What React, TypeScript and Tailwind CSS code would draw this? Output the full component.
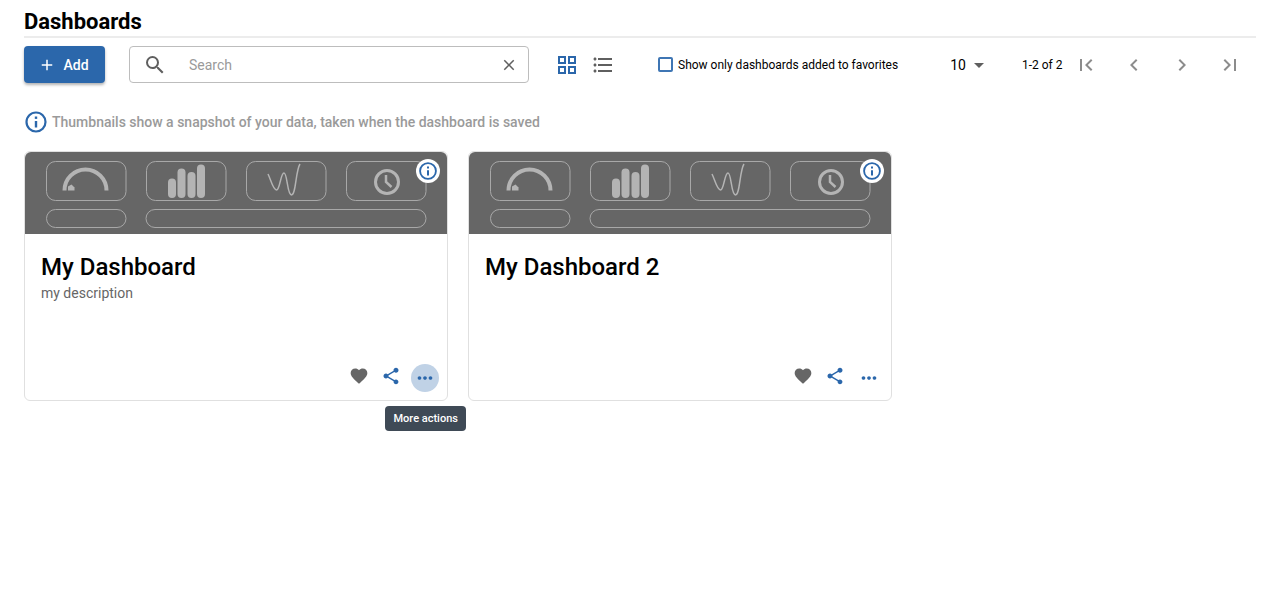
import React from 'react';
import {
  MdAdd,
  MdArrowDropDown,
  MdChevronLeft,
  MdChevronRight,
  MdClose,
  MdFavorite,
  MdFirstPage,
  MdFormatListBulleted,
  MdLastPage,
  MdMoreHoriz,
  MdSearch,
  MdShare,
} from 'react-icons/md';

const InfoIcon: React.FC<{ size: number }> = ({ size }) => (
  <svg viewBox="0 0 24 24" width={size} height={size} fill="none" stroke="currentColor">
    <circle cx="12" cy="12" r="9.500" strokeWidth="2.200" />
    <path d="M12 11v6.500" strokeWidth="2.400" />
    <path d="M12 6.500v2.400" strokeWidth="2.400" />
  </svg>
);

const Thumbnail: React.FC = () => (
  <svg viewBox="25 152 422 82" className="block h-[82px] w-[422px] bg-[#666666]" fill="none">
    <g stroke="#a8a8a8" strokeWidth="1">
      <rect x="46.5" y="161.5" width="79.500" height="39" rx="9" />
      <rect x="146.5" y="161.5" width="79.500" height="39" rx="9" />
      <rect x="246.5" y="161.5" width="79.500" height="39" rx="9" />
      <rect x="346.5" y="161.5" width="79.500" height="39" rx="9" />
      <rect x="46.5" y="209.5" width="79.500" height="18" rx="9" />
      <rect x="146" y="209.5" width="280" height="18" rx="9" />
    </g>
    <path d="M64.500 190.500a21 21 0 0 1 42 0" stroke="#b4b4b4" strokeWidth="4" />
    <path d="M68 190.500v-4l3.500-2 3 3v3z" fill="#b4b4b4" />
    <g stroke="#b4b4b4" strokeWidth="8" strokeLinecap="round">
      <path d="M172 182.500v11.500" />
      <path d="M181.500 172.500v21.500" />
      <path d="M191.500 176v18" />
      <path d="M201 168.500v25.500" />
    </g>
    <path
      d="M268 174c3 6 5 16 8.500 16s4-17 7.500-17 3 22 7.500 22 4-24 8.500-31"
      stroke="#b4b4b4"
      strokeWidth="1.500"
    />
    <circle cx="387" cy="182" r="11.500" stroke="#b4b4b4" strokeWidth="3" />
    <path d="M386 175v7l5.500 5" stroke="#b4b4b4" strokeWidth="2.500" />
  </svg>
);

interface CardProps {
  title: string;
  description?: string;
  hovered?: boolean;
}

const DashboardCard: React.FC<CardProps> = ({ title, description, hovered }) => (
  <div className="relative flex h-[250px] w-[424px] flex-col rounded-md border border-[#e0e0e0] bg-white">
    <div className="overflow-hidden rounded-t-md">
      <Thumbnail />
    </div>
    <div className="absolute top-[7px] right-[7px] flex h-6 w-6 items-center justify-center rounded-full bg-white text-[#2b67ab]">
      <InfoIcon size={20} />
    </div>
    <div className="flex-1 px-4 pt-[17px]">
      <h2 className="text-2xl leading-8 font-medium text-black">{title}</h2>
      {description && <p className="mt-[1px] text-sm leading-[18px] text-[#666666]">{description}</p>}
    </div>
    <div className="flex items-center justify-end gap-1 pr-2 pb-[6px]">
      <span className="mb-[4px] flex h-7 w-7 items-center justify-center text-[#666666]">
        <MdFavorite size={20} />
      </span>
      <span className="mb-[4px] flex h-7 w-7 items-center justify-center text-[#2b67ab]">
        <MdShare size={20} />
      </span>
      <span
        className={`ml-[2px] flex h-7 w-7 items-center justify-center rounded-full text-[#2b67ab] ${hovered ? 'bg-[#c0d2e6]' : ''}`}
      >
        <MdMoreHoriz size={22} />
      </span>
    </div>
    {hovered && (
      <div className="absolute top-[254px] left-[360px] rounded bg-[#3f4a56] px-[8.5px] py-[6px] text-[11px] leading-[13px] font-medium whitespace-nowrap text-white">
        More actions
      </div>
    )}
  </div>
);

export default function App() {
  return (
    <div className="min-h-[590px] bg-white px-6 font-['Roboto',sans-serif] text-black">
      <h1 className="h-[38px] border-b-2 border-[#ececec] pt-[8px] text-[22px] leading-[27px] font-bold">
        Dashboards
      </h1>

      <div className="mt-2 flex h-[37px] items-center">
        <button className="flex h-[37px] w-[81px] items-center justify-center gap-[7px] rounded bg-[#2b67ab] pr-[2px] text-sm font-medium text-white shadow-[0_2px_3px_rgba(0,0,0,0.3)]">
          <MdAdd size={18} />
          Add
        </button>

        <div className="ml-6 flex h-[37px] w-[400px] items-center rounded border border-[#bdbdbd] pr-[10px] pl-[13px]">
          <MdSearch size={24} className="text-[#5f5f5f]" />
          <span className="ml-[22px] flex-1 text-sm text-[#9a9a9a]">Search</span>
          <MdClose size={18} className="text-[#5f5f5f]" />
        </div>

        <svg viewBox="0 0 18 18" className="ml-[29px] h-[18px] w-[18px]" fill="none" stroke="#2b67ab" strokeWidth="2">
          <rect x="1" y="1" width="6" height="6" />
          <rect x="11" y="1" width="6" height="6" />
          <rect x="1" y="11" width="6" height="6" />
          <rect x="11" y="11" width="6" height="6" />
        </svg>
        <MdFormatListBulleted size={24} className="ml-[15px] text-[#5f5f5f]" />

        <span className="ml-[43px] h-[15px] w-[15px] rounded-[2px] border-2 border-[#3f76b4] bg-white" />
        <span className="ml-[5px] text-xs whitespace-nowrap">Show only dashboards added to favorites</span>

        <span className="ml-[52px] text-sm">10</span>
        <MdArrowDropDown size={24} className="ml-[1px] text-[#5f5f5f]" />
        <span className="ml-[31px] text-xs whitespace-nowrap">1-2 of 2</span>

        <div className="ml-[12px] flex items-center gap-6 text-[#8c8c8c]">
          <MdFirstPage size={24} />
          <MdChevronLeft size={24} />
          <MdChevronRight size={24} />
          <MdLastPage size={24} />
        </div>
      </div>

      <div className="mt-[27px] flex h-[24px] items-center gap-[4px] text-sm font-medium text-[#9a9a9a]">
        <span className="text-[#2b67ab]">
          <InfoIcon size={24} />
        </span>
        <span>Thumbnails show a snapshot of your data, taken when the dashboard is saved</span>
      </div>

      <div className="mt-[17px] flex gap-5">
        <DashboardCard title="My Dashboard" description="my description" hovered />
        <DashboardCard title="My Dashboard 2" />
      </div>
    </div>
  );
}
